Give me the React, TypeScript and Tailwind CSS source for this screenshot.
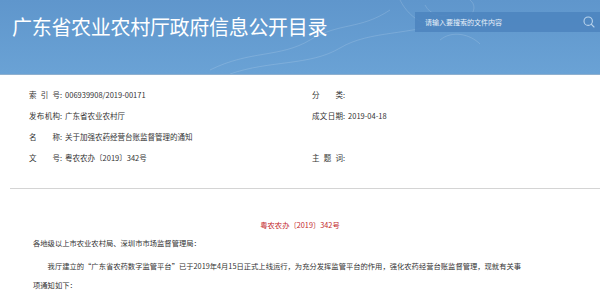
const font = "font-['Noto_Sans_CJK_SC','Noto_Sans',sans-serif]";

function SearchIcon() {
  return (
    <svg width="12" height="12" viewBox="0 0 12 12" fill="none" stroke="#b9d3ec" strokeWidth="1.1">
      <circle cx="5.2" cy="5.2" r="4.2" />
      <path d="M8.2 8.2 L11 11" strokeLinecap="round" />
    </svg>
  );
}

function MetaRow({ label, value }: { label: string; value?: string }) {
  return (
    <div className="flex h-[21px] items-center">
      <span className="inline-block w-[31px] [text-align-last:justify]">{label}</span>
      <span className="mr-[3px]">:</span>
      <span>{value}</span>
    </div>
  );
}

export default function App() {
  return (
    <div className={`${font} w-[600px] h-[298px] overflow-hidden bg-white text-[#333]`}>
      <header className="relative h-[75px] border-b border-[#8fb0cf] bg-gradient-to-b from-[#5f96cc] to-[#6aa2d5] overflow-hidden">
        {/* faint flower swirls */}
        <svg className="absolute left-[190px] top-0" width="300" height="74" viewBox="0 0 300 74" fill="none" stroke="#ffffff" strokeOpacity="0.18" strokeWidth="0.8">
          <path d="M20 70 C60 50 90 58 120 40 C150 22 170 30 200 10" />
          <path d="M40 74 C80 60 120 66 150 48 C180 30 220 36 260 20" />
          <path d="M210 0 C220 20 240 30 262 26 C280 22 290 8 280 0" />
          <path d="M235 5 C240 15 252 18 262 14" />
          <path d="M250 40 C262 30 280 34 290 44" />
        </svg>
        <div className="relative flex h-full items-start justify-between">
          <h1 className="ml-[12px] mt-[14px] text-[20px] leading-[26px] text-white tracking-[-0.3px]">
            广东省农业农村厅政府信息公开目录
          </h1>
          <div className="mt-[12px] flex h-[20px] w-[185px] items-center justify-between bg-[#4c84be]/85 pl-[10px] pr-[5px]">
            <span className="text-[7px] text-[#e8f1fa]">请输入要搜索的文件内容</span>
            <SearchIcon />
          </div>
        </div>
      </header>

      <section className="grid grid-cols-[283px_1fr] pl-[29px] pt-[9px] text-[7.5px]">
        <div>
          <MetaRow label="索引号" value="006939908/2019-00171" />
          <MetaRow label="发布机构" value="广东省农业农村厅" />
          <MetaRow label="名称" value="关于加强农药经营台账监督管理的通知" />
          <MetaRow label="文号" value="粤农农办〔2019〕342号" />
        </div>
        <div>
          <MetaRow label="分类" />
          <MetaRow label="成文日期" value="2019-04-18" />
          <div className="h-[21px]" />
          <MetaRow label="主题词" />
        </div>
      </section>

      <div className="ml-[10px] mt-[20px] h-px bg-[#d4d4d4]" />

      <div className="pt-[28px] text-center text-[7.3px] leading-[16px] text-[#c3272b]">
        粤农农办〔2019〕342号
      </div>

      <div className="ml-[33px] w-[492px] text-[7.3px]">
        <p className="leading-[20px]">各地级以上市农业农村局、深圳市市场监督管理局：</p>
        <p className="mt-[4px] indent-[2em] leading-[19px]">
          我厅建立的“广东省农药数字监管平台”已于2019年4月15日正式上线运行，为充分发挥监管平台的作用，强化农药经营台账监督管理，现就有关事项通知如下：
        </p>
      </div>
    </div>
  );
}
